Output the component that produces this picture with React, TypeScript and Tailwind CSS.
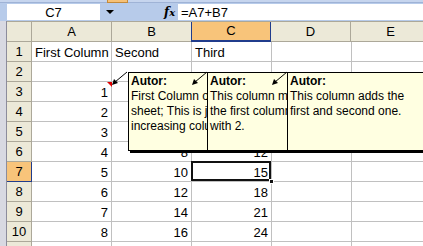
import React from "react";

const columns = ["A", "B", "C", "D", "E"];

type Row = { n: number; cells: string[] };

const rows: Row[] = [
  { n: 1, cells: ["First Column", "Second", "Third", "", ""] },
  { n: 2, cells: ["", "", "", "", ""] },
  ...[1, 2, 3, 4, 5, 6, 7, 8].map((v, i) => ({
    n: i + 3,
    cells: [String(v), String(v * 2), String(v * 3), "", ""],
  })),
  { n: 11, cells: ["", "", "", "", ""] },
];

// each comment is partly hidden behind the next one, like in the sheet
const comments = [
  {
    box: "left-[128px] w-[82px]",
    lines: ["First Column of the", "sheet; This is just an", "increasing column."],
  },
  {
    box: "left-[207px] w-[83px]",
    lines: ["This column multiplies", "the first column", "with 2."],
  },
  {
    box: "left-[287px] w-[140px]",
    lines: ["This column adds the", "first and second one."],
  },
];

function Arrow({ x, y }: { x: number; y: number }) {
  return (
    <g>
      <line x1={x + 15} y1={y - 13} x2={x + 3} y2={y - 3} stroke="black" strokeWidth="1" />
      <polygon points={`${x},${y} ${x + 2},${y - 6} ${x + 6},${y - 2}`} fill="black" />
    </g>
  );
}

export default function App() {
  return (
    <div className="relative w-[423px] h-[246px] overflow-hidden bg-[#d3d6de] font-['Liberation_Sans',Arial,sans-serif] text-black">
      {/* toolbar edge */}
      <div className="relative h-[3px] bg-[#c6d5ee] border-b border-[#9fb3d6]">
        <div className="absolute left-[107px] top-0 w-[21px] h-[3px] bg-[#f7c176] border-x border-b border-[#c48a3a]" />
      </div>

      {/* formula bar */}
      <div className="flex h-[18px] items-center pl-[7px] bg-[#b7cbea]">
        <div className="w-[93px] h-[16px] bg-white flex items-center justify-center text-[13px] leading-none">
          C7
        </div>
        <div className="w-[78px] h-[16px] flex items-center">
          <span className="ml-[6px] w-0 h-0 border-x-[4px] border-x-transparent border-t-[4px] border-t-black" />
          <span className="ml-[50px] font-['DejaVu_Serif',serif] italic font-bold text-[12px] leading-none">
            f<span className="text-[10px]">x</span>
          </span>
        </div>
        <div className="flex-1 h-[16px] bg-white flex items-center pl-[3px] text-[13px] leading-none">
          =A7+B7
        </div>
      </div>

      <div className="flex">
        <div className="w-[7px] shrink-0 bg-[#d8d9e2] border-r border-[#8c8c9c]" />
        <div className="flex flex-col bg-white">
          {/* column headers */}
          <div className="flex h-[21px] border-t border-[#aca899]">
            <div className="w-[25px] shrink-0 bg-[#ece9d8] border-r border-b border-[#aca899]" />
            {columns.map((c) => (
              <div
                key={c}
                className={
                  c === "C"
                    ? "w-[80px] shrink-0 flex items-center justify-center text-[13px] bg-[#f8c47a] border-r border-b-2 border-l border-[#203c8c] -ml-px"
                    : "w-[80px] shrink-0 flex items-center justify-center text-[13px] bg-[#ece9d8] border-r border-b border-[#aca899]"
                }
              >
                {c}
              </div>
            ))}
          </div>

          {rows.map((r) => (
            <div key={r.n} className="flex h-[20px]">
              <div
                className={
                  r.n === 7
                    ? "w-[25px] shrink-0 flex items-center justify-center text-[13px] bg-[#f8c47a] border-r border-b border-[#203c8c]"
                    : "w-[25px] shrink-0 flex items-center justify-center text-[13px] bg-[#ece9d8] border-r border-b border-[#aca899]"
                }
              >
                {r.n < 11 ? r.n : ""}
              </div>
              {r.cells.map((v, i) => {
                const isText = r.n === 1;
                const selected = r.n === 7 && i === 2;
                return (
                  <div
                    key={i}
                    className={
                      "relative w-[80px] shrink-0 flex items-center pt-[2px] text-[13px] whitespace-nowrap border-r border-b border-[#c0c0c0] " +
                      (isText ? "justify-start pl-[3px]" : "justify-end pr-[3px]") +
                      (selected ? " z-10" : "")
                    }
                  >
                    {v}
                    {r.n === 3 && i === 0 && (
                      <span className="absolute right-[-1px] top-0 w-0 h-0 border-l-[5px] border-l-transparent border-t-[5px] border-t-[#e00000]" />
                    )}
                    {selected && (
                      <>
                        <span className="absolute -top-px -left-px right-0 bottom-0 border-2 border-[#111]" />
                        <span className="absolute right-[-3px] bottom-[-3px] w-[5px] h-[5px] bg-[#111] border border-white" />
                      </>
                    )}
                  </div>
                );
              })}
            </div>
          ))}
        </div>
      </div>

      {/* comment boxes */}
      {comments.map((c, i) => (
        <div
          key={i}
          className={
            "absolute top-[72px] h-[79px] overflow-hidden bg-[#ffffe1] border border-black shadow-[2px_2px_0_0_#000] px-[2px] pt-[1px] text-[12px] leading-[15px] whitespace-nowrap z-20 " +
            c.box
          }
        >
          <div className="font-bold">Autor:</div>
          {c.lines.map((l) => (
            <div key={l}>{l}</div>
          ))}
        </div>
      ))}

      <svg className="absolute left-0 top-0 z-30 pointer-events-none" width="423" height="246">
        <Arrow x={112} y={85} />
        <Arrow x={192} y={85} />
        <Arrow x={272} y={85} />
      </svg>
    </div>
  );
}
